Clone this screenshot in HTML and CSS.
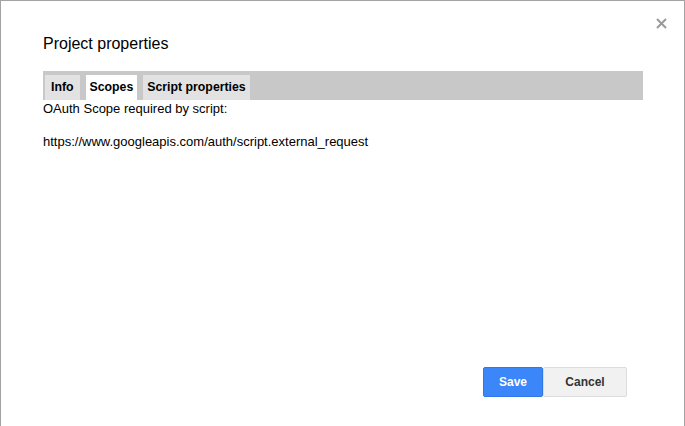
FILE: index.html
```html
<!DOCTYPE html>
<html>
<head>
<meta charset="utf-8">
<link rel="stylesheet" href="styles.css">
</head>
<body>
<div class="dialog">
  <div class="title-row">
    <span class="title">Project properties</span>
    <span class="close" aria-label="Close">
      <svg width="11" height="11" viewBox="0 0 11 11"><path d="M1 1L10 10M10 1L1 10" stroke="#9a9a9a" stroke-width="2"/></svg>
    </span>
  </div>
  <div class="tabbar">
    <div class="tab first">Info</div>
    <div class="tab selected">Scopes</div>
    <div class="tab">Script properties</div>
  </div>
  <div class="content">
    <div class="line">OAuth Scope required by script:</div>
    <div class="line scope">https://www.googleapis.com/auth/script.external_request</div>
  </div>
  <div class="buttons">
    <button class="btn save">Save</button>
    <button class="btn cancel">Cancel</button>
  </div>
</div>
</body>
</html>
```
FILE: styles.css
```css
html, body {
  margin: 0;
  padding: 0;
  background: #fff;
}
body {
  font-family: "Liberation Sans", Arial, sans-serif;
  color: #000;
}
.dialog {
  box-sizing: border-box;
  width: 685px;
  height: 440px;
  border: 1px solid #a3a3a3;
  border-bottom: none;
  padding: 0 41px 0 42px;
  display: flex;
  flex-direction: column;
}
.title-row {
  position: relative;
  padding-top: 33px;
  height: 37px;
}
.title {
  font-size: 16px;
  line-height: 20px;
  color: #000;
}
.close {
  position: absolute;
  right: -24px;
  top: 17px;
  width: 11px;
  height: 11px;
  display: flex;
}
.tabbar {
  background: #c8c8c8;
  height: 29px;
  display: flex;
  align-items: flex-end;
  gap: 6px;
  padding-left: 2px;
}
.tab {
  background: #e2e2e2;
  height: 25px;
  line-height: 25px;
  padding: 0 4px;
  font-size: 12.3px;
  font-weight: bold;
}
.tab.first {
  padding: 0 6px;
}
.tab.selected {
  background: #fff;
}
.content {
  font-size: 13px;
  line-height: 16px;
  flex: 1;
  padding-top: 1px;
}
.scope {
  margin-top: 17px;
}
.buttons {
  display: flex;
  justify-content: flex-end;
  padding-right: 16px;
  margin-bottom: 43px;
}
.btn {
  font-family: "Liberation Sans", Arial, sans-serif;
  font-size: 12px;
  font-weight: bold;
  height: 30px;
  border-radius: 2px;
  padding: 0;
  margin: 0;
}
.save {
  width: 60px;
  background: #3b86f8;
  border: 1px solid #2f78e6;
  color: #fff;
}
.cancel {
  width: 84px;
  background: #f1f1f1;
  border: 1px solid #dcdcdc;
  color: #333;
}
```
